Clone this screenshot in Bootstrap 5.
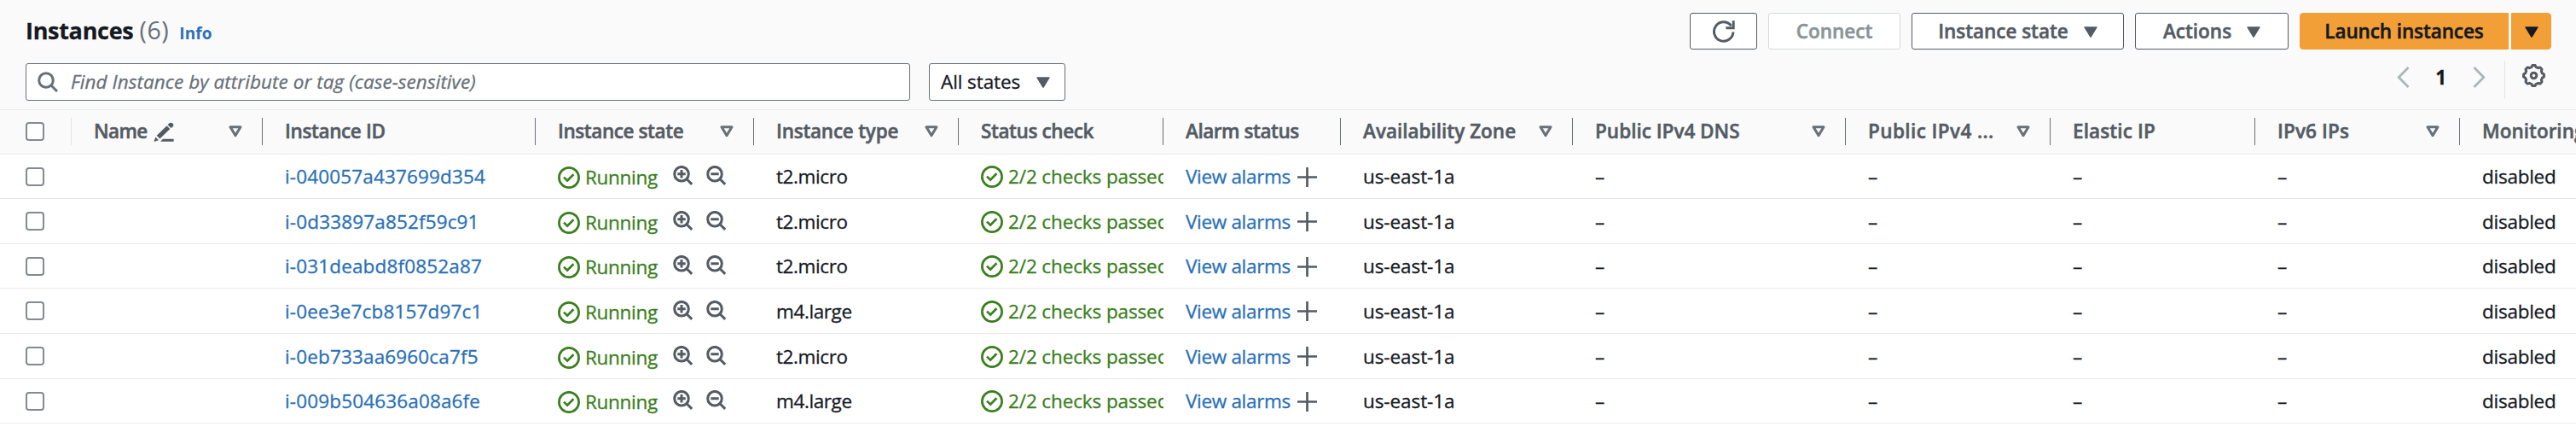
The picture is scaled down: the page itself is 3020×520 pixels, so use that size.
<!DOCTYPE html>
<html lang="en">
<head>
<meta charset="utf-8">
<title>Instances</title>
<link href="https://cdn.jsdelivr.net/npm/bootstrap@5.3.0/dist/css/bootstrap.min.css" rel="stylesheet">
<style>
body{font-family:"Open Sans","Noto Sans",sans-serif;font-size:22.5px;line-height:30px;color:#16191f;background:#fff;overflow:hidden;-webkit-text-stroke:.3px currentColor}
svg{display:block;flex:none}
a{color:#2a70b8;text-decoration:none}
.toolbar{height:129px;background:#fafafa;border-bottom:1px solid #eaeaea;padding:15px 29px 0 30px}
.heading{margin-top:2px}
.title{font-size:27px;font-weight:700;letter-spacing:-.3px;line-height:36px}
.counter{font-size:28.5px;color:#687078;line-height:36px;margin-left:7px;letter-spacing:.6px;-webkit-text-stroke:0}
.info{font-size:19px;font-weight:700;letter-spacing:.1px;margin-left:12px;line-height:36px;-webkit-text-stroke:0}
.tool{--bs-btn-font-size:22.5px;--bs-btn-font-weight:600;--bs-btn-line-height:30px;--bs-btn-padding-y:0;--bs-btn-padding-x:0;--bs-btn-border-width:1px;--bs-btn-border-radius:3px;--bs-btn-color:#545b64;--bs-btn-border-color:#545b64;--bs-btn-bg:#fff;--bs-btn-disabled-color:#879596;--bs-btn-disabled-border-color:#d5dbdb;--bs-btn-disabled-bg:#fff;--bs-btn-disabled-opacity:1;height:43px;display:flex;align-items:center;justify-content:center;-webkit-text-stroke:.5px currentColor}
.tool svg.tri{margin-top:1px}
.launch{--bs-btn-bg:#f29f38;--bs-btn-border-color:#f29f38;--bs-btn-color:#16191f}
.w-refresh{width:79px}.w-connect{width:155px}.w-state{width:249px;letter-spacing:-.05px}.w-actions{width:180px}
.w-launch{width:245px;border-radius:4px 0 0 4px;letter-spacing:-.11px}.w-caret{width:47px;border-radius:0 4px 4px 0}
.gap-tools{gap:13px}.gap-caret{gap:18px}.gap-split{gap:3px}
.second{margin-top:16px}
.search{width:1037px;height:44px;border:1px solid #687078;border-radius:3px;background:#fff;padding-left:13px}
.search em{color:#687078;margin-left:15px;letter-spacing:.06px;line-height:30px}
.filter{width:160px;height:44px;border:1px solid #687078;border-radius:3px;background:#fff;padding:0 17px 0 13px;margin-left:22px;letter-spacing:-.09px}
.pager{height:44px;margin-top:-6px}
.page-no{font-weight:700;margin:0 31px 0 30px;line-height:30px;padding-top:2px}
.gear{border-left:1px solid #e3e6e6;height:44px;padding:0 7px 0 20px;margin:6px 0 0 22px}
.gear svg{margin-top:-9px}
.grid{table-layout:fixed;width:3140px;border-collapse:separate;border-spacing:0}
.grid th,.grid td{padding:0 0 0 26px;border-bottom:1px solid #e9ebeb;overflow:hidden;white-space:nowrap;height:52px;vertical-align:middle}
.grid tr.tall td{height:53px}
.grid td+td{padding-top:1px}
.grid th{background:#fafafa;color:#545b64;font-weight:600;height:52px;-webkit-text-stroke:.5px currentColor}
.grid th:first-child,.grid td:first-child{padding-left:30px}
.head{height:32px;border-right:1px solid #687078;padding-right:23px;margin-top:-1px}
.head.faint{border-right:1px solid #e3e6e6}
.cell{height:30px}
.box{width:22px;height:22px;border:2px solid #838a91;border-radius:4px;background:#fff}
.ok{color:#3a7f1e}
.icon-grey{color:#545b64}
.run{letter-spacing:-.29px;margin:2px 18px 0 6px}
.checks{letter-spacing:-.12px;margin-left:6px}
.t-zone{letter-spacing:-.08px}
.t-id{letter-spacing:.15px}.t-type{letter-spacing:-.4px}.t-alarm{letter-spacing:-.32px}.t-dis{letter-spacing:-.25px}
th:nth-child(2) .lbl{letter-spacing:-.6px}th:nth-child(3) .lbl{letter-spacing:-.38px}th:nth-child(4) .lbl{letter-spacing:-.42px}
th:nth-child(5) .lbl{letter-spacing:-.24px}th:nth-child(6) .lbl{letter-spacing:-.4px}th:nth-child(7) .lbl{letter-spacing:-.45px}
th:nth-child(10) .lbl{letter-spacing:.4px}th:nth-child(11) .lbl,th:nth-child(12) .lbl{letter-spacing:.12px}
</style>
</head>
<body>
<svg width="0" height="0" class="position-absolute" aria-hidden="true">
<symbol id="tri" viewBox="0 0 16 13"><path d="M.8.3h14.4q.8 0 .5.8L8.7 12.5q-.7.8-1.4 0L.3 1.1Q0 .3.8.3z" fill="currentColor"/></symbol>
<symbol id="sort" viewBox="0 0 16 14"><path d="M2 1.8h12L8 11.6z" fill="none" stroke="#687078" stroke-width="3" stroke-linejoin="round"/></symbol>
<symbol id="check" viewBox="0 0 26 26"><circle cx="13" cy="13" r="11.6" fill="none" stroke="currentColor" stroke-width="2.7"/><path d="M7 12.6l4.1 4 7.3-7.3" fill="none" stroke="currentColor" stroke-width="2.7"/></symbol>
<symbol id="zin" viewBox="0 0 23 23"><g fill="none" stroke="currentColor" stroke-width="3"><circle cx="10" cy="9.7" r="8.3"/><path d="M15.8 15.5l6.4 6.4M5.3 9.7h9.4M10 5v9.4"/></g></symbol>
<symbol id="zout" viewBox="0 0 23 23"><g fill="none" stroke="currentColor" stroke-width="3"><circle cx="10" cy="9.7" r="8.3"/><path d="M15.8 15.5l6.4 6.4M5.3 9.7h9.4"/></g></symbol>
<symbol id="plus" viewBox="0 0 23 23"><path d="M0 11.5h23M11.5 0v23" stroke="currentColor" stroke-width="2.7"/></symbol>
</svg>

<header class="toolbar">
  <div class="d-flex align-items-start">
    <div class="heading d-flex align-items-baseline">
      <div class="title">Instances</div><div class="counter">(6)</div><a href="#" class="info">Info</a>
    </div>
    <div class="d-flex gap-tools ms-auto">
      <button class="btn tool w-refresh" aria-label="Refresh"><svg width="28" height="28" viewBox="0 0 28 28" fill="none" stroke="#545b64" stroke-width="3"><path d="M24.9 14.5A11.2 11.2 0 1 1 22.6 7.2M25.2 1.2v8.6h-8.8"/></svg></button>
      <button class="btn tool w-connect" disabled>Connect</button>
      <button class="btn tool w-state gap-caret">Instance state<svg class="tri" width="16" height="13"><use href="#tri"/></svg></button>
      <button class="btn tool w-actions gap-caret">Actions<svg class="tri" width="16" height="13"><use href="#tri"/></svg></button>
      <div class="d-flex gap-split"><button class="btn tool launch w-launch">Launch instances</button><button class="btn tool launch w-caret" aria-label="More"><svg class="tri" width="16" height="13"><use href="#tri"/></svg></button></div>
    </div>
  </div>
  <div class="d-flex second">
    <div class="search d-flex align-items-center"><svg width="24" height="24" viewBox="0 0 24 24" fill="none" stroke="#687078" stroke-width="3"><circle cx="10" cy="10" r="8.3"/><path d="M16 16l7 7"/></svg><em>Find Instance by attribute or tag (case-sensitive)</em></div>
    <div class="filter d-flex align-items-center justify-content-between">All states<svg class="icon-grey" width="16" height="13"><use href="#tri"/></svg></div>
    <nav class="pager d-flex align-items-center ms-auto">
      <svg width="15" height="25" viewBox="0 0 15 25" fill="none" stroke="#aab7b8" stroke-width="2.8"><path d="M13.5 1L2.2 12.5l11.3 11.5"/></svg>
      <span class="page-no">1</span>
      <svg width="15" height="25" viewBox="0 0 15 25" fill="none" stroke="#aab7b8" stroke-width="2.8"><path d="M1.5 1l11.3 11.5L1.5 24"/></svg>
      <span class="gear d-flex align-items-center"><svg width="27" height="27" viewBox="-13.5 -13.5 27 27" fill="none" stroke="#545b64" stroke-width="3" stroke-linejoin="round"><circle r="3.3"/><path id="cog"/></svg></span>
    </nav>
  </div>
</header>

<table class="grid">
  <colgroup id="cols"></colgroup>
  <thead><tr id="heads"></tr></thead>
  <tbody id="rows"></tbody>
</table>

<script>
const columns=[["",84],["Name",224,1],["Instance ID",320],["Instance state",256,1],["Instance type",240,1],["Status check",240],["Alarm status",208],["Availability Zone",272,1],["Public IPv4 DNS",320,1],["Public IPv4 ...",240,1],["Elastic IP",240],["IPv6 IPs",240,1],["Monitoring",256]];
const instances=[["i-040057a437699d354","t2.micro"],["i-0d33897a852f59c91","t2.micro",1],["i-031deabd8f0852a87","t2.micro"],["i-0ee3e7cb8157d97c1","m4.large",1],["i-0eb733aa6960ca7f5","t2.micro",1],["i-009b504636a08a6fe","m4.large"]];
const icon=(id,w,h,cls="")=>`<svg class="${cls}" width="${w}" height="${h}"><use href="#${id}"/></svg>`;
const pencil='<svg width="24" height="24" viewBox="0 0 24 24" fill="#545b64" style="margin:1px 0 0 7px"><path d="M.4 23l2-5.6 3.6 3.9z"/><path d="M3.7 15.8L15.6 4.2l3.7 3.8L7.4 19.6z"/><path d="M16.6 3.2l1.6-1.6q2.2-1.9 4.2 0t0 4l-1.9 1.5z"/><path d="M11 19.8h12.6v3H8z"/></svg>';
document.getElementById("cols").innerHTML=columns.map(c=>`<col style="width:${c[1]}px">`).join("");
document.getElementById("heads").innerHTML=columns.map((c,i)=>`<th><div class="head d-flex align-items-center ${i?"":"faint"}">${i?`<span class="lbl">${c[0]}</span>`:'<span class="box"></span>'}${i==1?pencil:""}${c[2]?icon("sort",16,14,"ms-auto"):""}</div></th>`).join("");
const dash="<td>–</td>";
document.getElementById("rows").innerHTML=instances.map(r=>`<tr class="${r[2]?"tall":""}"><td><div class="box"></div></td><td></td>
<td><a href="#" class="t-id">${r[0]}</a></td>
<td><div class="cell d-flex align-items-center ok"><span class="pt-1" style="margin-top:-2px">${icon("check",26,26)}</span><span class="run">Running</span><span class="icon-grey d-flex" style="gap:16px;margin-top:-3px">${icon("zin",23,23)}${icon("zout",23,23)}</span></div></td>
<td class="t-type">${r[1]}</td>
<td><div class="cell d-flex align-items-center ok overflow-hidden">${icon("check",26,26)}<span class="checks">2/2 checks passed</span></div></td>
<td><div class="cell d-flex align-items-center"><a href="#" class="t-alarm">View alarms</a><span class="icon-grey ps-2">${icon("plus",23,23)}</span></div></td>
<td class="t-zone">us-east-1a</td>${dash.repeat(4)}<td class="t-dis">disabled</td></tr>`).join("");
// eight-lobed gear outline
let d="";for(let i=0;i<=96;i++){const a=i/96*2*Math.PI,r=11.1+Math.max(-.9,Math.min(.9,1.8*Math.cos(8*a)));d+=(i?"L":"M")+(r*Math.cos(a)).toFixed(2)+" "+(r*Math.sin(a)).toFixed(2)}
document.getElementById("cog").setAttribute("d",d+"Z");
</script>
<script src="https://cdn.jsdelivr.net/npm/bootstrap@5.3.0/dist/js/bootstrap.bundle.min.js"></script>
</body>
</html>
